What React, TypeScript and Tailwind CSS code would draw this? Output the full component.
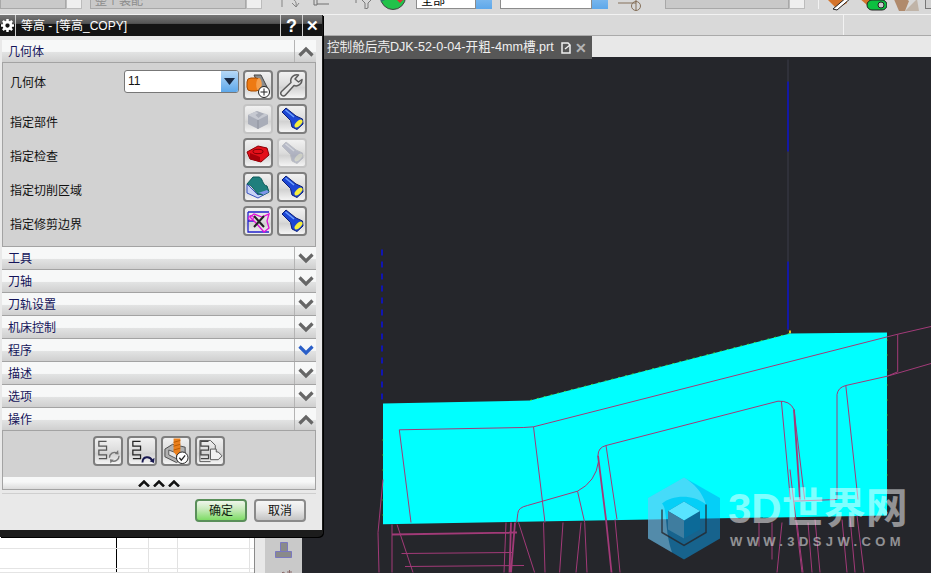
import type { ReactNode } from 'react';

const sections = ['工具', '刀轴', '刀轨设置', '机床控制', '程序', '描述', '选项'];
const columns = ['w-[117px] border-r border-black', 'w-[32px] border-r border-[#e2e2e2]', 'w-[29px] border-r border-[#e2e2e2]', 'w-[72px] border-r border-[#e2e2e2]'];
const sheetRows = ['h-[12px]', 'h-[20px]', 'h-[4px]'];

function Chevron({ up = false, color = '#666666' }: { up?: boolean; color?: string }) {
  return (
    <svg width="16" height="11" viewBox="0 0 16 11">
      <path d={up ? 'M1.500 9.500 8 3l6.500 6.500' : 'M1.500 1.500 8 8l6.500-6.500'} fill="none" stroke={color} strokeWidth="3.200" />
    </svg>
  );
}

function SectionHead({ title, open = false, blue = false }: { title: string; open?: boolean; blue?: boolean }) {
  return (
    <div className="flex h-[23px] items-stretch border-b border-[#a3a3a3] bg-[linear-gradient(#f7f8f8_52%,#e2e3e3_56%,#cfcfcf)]">
      <span className="flex-1 pl-[6px] pt-[4px] text-[12px] leading-[17px] text-[#14145a]">{title}</span>
      <span className="flex w-[22px] items-center justify-center border-l border-[#b4b4b4]">
        <Chevron up={open} color={blue ? '#2a5fc8' : '#666666'} />
      </span>
    </div>
  );
}

function IconButton({ children, dim = false }: { children: ReactNode; dim?: boolean }) {
  return (
    <button
      className={`flex h-[30px] w-[30px] shrink-0 items-center justify-center rounded-[4px] border-2 bg-[linear-gradient(#f1f1f1,#dcdcdc_50%,#d2d2d2_60%,#f4f4f4)] ${
        dim ? 'border-[#c4c4c4]' : 'border-[#7e7e7e]'
      }`}
    >
      {children}
    </button>
  );
}

function Flashlight({ dim = false }: { dim?: boolean }) {
  return (
    <svg width="25" height="25" viewBox="0 0 25 25" opacity={dim ? 0.55 : 1}>
      <path
        d="M2 5 6 1l10 8 6.500 3 .5 5-6 5.500-5-2.500-1.500-6.500z"
        fill={dim ? '#8f95ad' : '#1c46d4'}
        stroke={dim ? '#9a9ea8' : '#0b1f78'}
      />
      <path d="M5.500 3 14 10" stroke={dim ? '#c4c8d4' : '#6fa0ff'} strokeWidth="1.500" />
      <ellipse cx="18.500" cy="16.500" rx="5" ry="2.400" transform="rotate(-45 18.500 16.500)" fill={dim ? '#c6c9b8' : '#f6ee3c'} />
    </svg>
  );
}

function GeometryNew() {
  return (
    <svg width="26" height="26" viewBox="0 0 26 26">
      <path d="M9 3h7l7 14-6 3z" fill="#8c8c8c" stroke="#444444" />
      <rect x="2" y="6" width="13" height="13" rx="4" fill="#ee7a12" stroke="#a84c00" />
      <ellipse cx="14" cy="12.500" rx="2.800" ry="6.500" fill="#f6a04c" />
      <circle cx="19" cy="20" r="5.500" fill="#ffffff" stroke="#222222" />
      <path d="M19 16.500v7M15.500 20h7" stroke="#222222" />
    </svg>
  );
}

function WrenchIcon() {
  return (
    <svg width="26" height="26" viewBox="0 0 26 26">
      <path
        d="M23 7.500a6 6 0 0 1-8 6L6.500 23a2.600 2.600 0 0 1-4-3.500L12 10.500a6 6 0 0 1 7.500-7.500L16 7l3.500 3z"
        fill="#e6e6e6"
        stroke="#5c5c5c"
        strokeWidth="1.500"
        strokeLinejoin="round"
      />
    </svg>
  );
}

function PartIcon() {
  return (
    <svg width="26" height="26" viewBox="0 0 26 26">
      <path d="M3 9 12 5l11 4v9l-10 5-10-5z" fill="#a9adb8" />
      <path d="M3 9l10 5 10-5-3-1.500-3 1.500-3.500 3-3-3 3-2-3-1.500z" fill="#c6c9d1" />
      <path d="M13 14v9" stroke="#8d919c" />
    </svg>
  );
}

function CheckIcon() {
  return (
    <svg width="26" height="26" viewBox="0 0 26 26">
      <path d="M2 12 13 6l9 2 2 7-8 7-11-3z" fill="#e4101a" stroke="#8a0006" />
      <path d="M5 19v-6l10 4v5z" fill="#a8000a" />
      <ellipse cx="13" cy="11.500" rx="5" ry="2.200" fill="none" stroke="#7a0005" />
    </svg>
  );
}

function AreaIcon() {
  return (
    <svg width="26" height="26" viewBox="0 0 26 26">
      <path d="M2 10v9l11 5 11-6-2-2-9 5z" fill="#c7d2f5" stroke="#3a52c0" />
      <path d="M2 10 8 3h6c4 1 3 8 8 9l2 6-6 3-5-1C9 16 7 11 2 10z" fill="#1f7f7d" stroke="#0c5a5a" />
      <path d="M13 19c3 0 5 1 5 2l6-3-2-2z" fill="#7f95ea" />
    </svg>
  );
}

function BoundaryIcon() {
  return (
    <svg width="26" height="26" viewBox="0 0 26 26">
      <path d="M3 4h21M3 4v20h21M3 13h6" fill="none" stroke="#2222cc" strokeWidth="1.300" />
      <path d="M5 9 9 6l8 3 7-3-2 7 2 7-5 4-8-9z" fill="none" stroke="#e010d8" strokeWidth="1.300" />
      <circle cx="6" cy="10" r="2.500" fill="none" stroke="#e010d8" />
      <path d="m9 8 10 11M19 8 9 19" stroke="#222222" strokeWidth="2" />
    </svg>
  );
}

function Steps({ color = '#555555' }: { color?: string }) {
  return <path d="M12 3H4v5h8v4H4v5h8v4H4" fill="none" stroke={color} strokeWidth="1.300" />;
}

function VerifyOp() {
  return (
    <svg width="27" height="27" viewBox="0 0 27 27">
      <Steps />
      <path d="M15 20a5.500 5.500 0 0 1 8-5M25 18a5.500 5.500 0 0 1-8 5" fill="none" stroke="#777777" strokeWidth="1.400" />
      <path d="m24 12 .5 4.500-4-.5zM16 26l-.5-4.500 4 .5z" fill="#777777" />
    </svg>
  );
}

function ReplayOp() {
  return (
    <svg width="27" height="27" viewBox="0 0 27 27">
      <Steps color="#222222" />
      <path d="M14 25c0-7 8-7 10-2" fill="none" stroke="#181850" strokeWidth="2" />
      <path d="m26.500 20-.5 5.500-4.500-2z" fill="#181850" />
    </svg>
  );
}

function SimulateOp() {
  return (
    <svg width="27" height="27" viewBox="0 0 27 27">
      <path d="M2 11 10 6l13 3v10l-9 6-12-6z" fill="#b0b0b0" stroke="#4a4a4a" />
      <path d="M6 12l8 3v6l-8-4z" fill="#e4e4e4" stroke="#555555" />
      <path d="M11 0h7v14l-3.500 4-3.500-4z" fill="#ea7f1c" />
      <path d="m11 4 7-2M11 8l7-2M11 12l7-2" stroke="#b85a00" />
      <circle cx="20" cy="20" r="6" fill="#ffffff" stroke="#222222" />
      <path d="m17 20 2 2.500 4-5" fill="none" stroke="#222222" strokeWidth="1.300" />
    </svg>
  );
}

function ListOp() {
  return (
    <svg width="27" height="27" viewBox="0 0 27 27">
      <path d="M3 2h11l5 5v6M3 2v22h11" fill="none" stroke="#555555" />
      <Steps color="#444444" />
      <path d="M14 11h6v3h2l4 4-4 4H14z" fill="#f1f1f1" stroke="#555555" />
    </svg>
  );
}

function ViewportDrawing() {
  return (
    <svg viewBox="302 60 629 513" className="block h-full w-full">
      <path d="M788 60v272" stroke="#3c3c4a" />
      <path d="M788 82v70M788 262v68" stroke="#0a10c8" strokeWidth="1.500" />
      <path d="M382 250v154" stroke="#0a10e0" strokeWidth="1.500" strokeDasharray="6 6" />
      <rect x="789" y="331" width="2" height="3" fill="#e8c020" />
      <path d="M383 404 530 401 790 334 887 333 887 516 383 524.700z" fill="#00ffff" />
      <path d="M530 401 790 334" stroke="#38f050" strokeDasharray="2 5" />
      <path d="M887 340v180M383 440v84" stroke="#38f050" strokeDasharray="1 14" />
      <g fill="none" stroke="#a23a78">
        <path d="M411 523 399.300 430.300 523.800 428 533.500 427.300 897.700 334.700 931 327" />
        <path d="M533.500 427.300 545 523M887.300 376.700 931 364M897.700 334.700V372.300L887.300 376.700 845.800 386Q838 388 837 395L837 500M845.800 386 858 500" />
        <path d="M606 446 778 401.700Q790 401 794 410L804.700 500M781.400 401.700 790.400 500M606 446 617 520M606 446Q598 448 598 456" />
        <path d="M598.500 462Q596 482 577.500 491.700L527.400 506Q518 508 517.800 514L516.700 523M577.500 491.700 584.700 523M793 501.700 836.700 500" />
        <path d="M383 480 378 533 379 573" />
        <path d="M392 525V573M397 525 413 573M506 523 504 573M518.500 523 534.600 573M543.500 523 545 573M563 523 559.600 573M581 523 576 573M584.700 523 587 573M615 520 620 573" />
        <path d="M401.500 554 513 553M405 567 524 566" />
        <path d="M759 523V547M772 523V560M782 523 777 573M790 470 802 573M797 523 803 573M808 523 812 573M815 520 820 573M842 520 847 573M850 518 855 573M857 516 864 573" />
      </g>
      <g fill="none" stroke="#a23a78" strokeWidth="1.800">
        <path d="M392 535 517 533M511 523 509.500 573M515 523 511 573M598 456 606 520 611.500 573M794 410 800 500" />
      </g>
      <path d="M684 478 720 498.500V539L684 560 648 539V498.500z" fill="#0aa0f0" opacity="0.5" />
      <path d="M684 478 648 498.500V539L672 553C664 530 668 510 662 504 672 496 692 494 706 505 702 492 694 484 684 478z" fill="#ffffff" opacity="0.26" />
      <path d="M684 502 700 511.500V530L684 539 668 530V511.500z" fill="#0c6a98" />
      <path d="M684 502 700 511.500 684 521 668 511.500z" fill="#58e4ff" />
      <path d="M668 511.500 684 521V539L668 530z" fill="#3f7d9f" />
      <path d="M662 510V533L684 546 706 533V510M706 505V533" fill="none" stroke="#25262b" strokeWidth="1.500" opacity="0.8" />
    </svg>
  );
}

export default function App() {
  return (
    <div className="relative flex h-[573px] w-[931px] flex-col overflow-hidden bg-[#25262b] font-['Liberation_Sans','Noto_Sans_CJK_SC',sans-serif]">
      {/* top toolbar, only its lower edge is in the shot */}
      <div className="flex h-[15px] items-end overflow-hidden border-b border-[#f2f2f2] bg-[#d8d8d8] pb-[5px]">
        <div className="flex items-end">
          <div className="h-[22px] w-[66px] border border-[#a8a8a8] bg-[#c9c9c9]" />
          <div className="h-[22px] w-[16px] border border-[#bcbcbc] bg-[#efefef]" />
          <div className="ml-[8px] flex h-[22px] w-[156px] items-end border border-[#a8a8a8] bg-[#c9c9c9] pl-[4px] text-[12px] leading-[14px] text-[#8c8c8c]">
            整个装配
          </div>
          <div className="h-[22px] w-[16px] border border-[#bcbcbc] bg-[#efefef]" />
          <svg width="24" height="14" viewBox="0 0 24 14" className="ml-[16px]">
            <path d="M4 2v10M10 0c0 5 10 2 8 12M14 8l4 4 3-4" fill="none" stroke="#858585" />
          </svg>
          <svg width="20" height="14" viewBox="0 0 20 14" className="ml-[10px]">
            <path d="M2 1h3v9H2zM5 4h12M5 9h12" fill="none" stroke="#707070" />
          </svg>
          <svg width="20" height="14" viewBox="0 0 20 14" className="ml-[23px]">
            <path d="M4 2h15l-6 6v5l-3 1V8zM1 1v7" fill="none" stroke="#7a7a7a" />
          </svg>
          <svg width="26" height="26" viewBox="0 0 26 26" className="ml-[5px] mb-[-1px]">
            <circle cx="13" cy="13" r="12.500" fill="#22c24a" stroke="#444444" />
            <path d="M13 12 25 5l1 8-6 6z" fill="#e23030" />
            <path d="M13 12 1 18l-1-7 3-8z" fill="#2a7a6a" />
          </svg>
          <div className="ml-[10px] flex h-[22px] w-[60px] items-end border border-[#8c8c8c] bg-white pl-[4px] text-[12px] leading-[14px]">全部</div>
          <div className="h-[22px] w-[16px] bg-[linear-gradient(#9ccaf2,#5ea8ea)]" />
          <div className="ml-[8px] h-[22px] w-[92px] border border-[#8c8c8c] bg-white" />
          <div className="h-[22px] w-[16px] bg-[linear-gradient(#9ccaf2,#5ea8ea)]" />
          <svg width="26" height="16" viewBox="0 0 26 16" className="ml-[10px] mb-[-2px]">
            <path d="M0 8h18M18 0v16" stroke="#85705a" fill="none" />
            <circle cx="18" cy="11" r="4.500" fill="none" stroke="#85705a" />
          </svg>
          <div className="ml-[21px] h-[22px] w-[124px] border border-[#a8a8a8] bg-[#c9c9c9]" />
          <div className="h-[22px] w-[16px] border border-[#bcbcbc] bg-[#efefef]" />
          <div className="ml-[13px] h-[14px] w-px bg-[#f2f2f2]" />
          <svg width="26" height="16" viewBox="0 0 26 16" className="ml-[8px] mb-[-2px]">
            <path d="M0 4 6 0h14v8L10 14z" fill="#d4742c" />
            <path d="M6 14 20 2l4 1-14 12z" fill="#ffffff" stroke="#222222" />
          </svg>
          <svg width="28" height="16" viewBox="0 0 28 16" className="ml-[6px] mb-[-2px]">
            <path d="M0 3 5 0h10v6L8 10z" fill="#d4742c" />
            <rect x="8" y="5" width="20" height="10" rx="5" fill="#0cc040" stroke="#222222" />
            <circle cx="22" cy="10" r="3" fill="#c9c9c9" stroke="#222222" />
          </svg>
          <svg width="26" height="16" viewBox="0 0 26 16" className="ml-[6px] mb-[-2px]">
            <path d="M0 2 8 0l8 6-4 10H6z" fill="#b08a6c" />
            <path d="M12 16 24 4l2 12z" fill="#c0b4a8" />
          </svg>
          <div className="ml-[6px] h-[12px] w-[12px] border border-[#777777] bg-[#d0d0d0]" />
        </div>
      </div>

      <div className="flex h-[21px] justify-end border-b border-[#aaaaaa] bg-[#d9d9d9] pr-[87px]">
        <div className="h-full w-px bg-[#f2f2f2]" />
      </div>

      <div className="flex h-[23px]">
        <div className="h-[21px] w-[323px] bg-[#e8e8e8]" />
        <div className="flex h-[23px] w-[269px] items-center bg-[#575757] pl-[4px] text-[12.600px] text-[#efefef]">
          <span className="w-[233px] shrink-0 whitespace-nowrap">控制舱后壳DJK-52-0-04-开粗-4mm槽.prt</span>
          <svg width="10" height="12" viewBox="0 0 10 12" className="ml-[1px] shrink-0">
            <path d="M1 1h6l2 2v8H1z" fill="#575757" stroke="#efefef" strokeWidth="1.500" />
            <path d="M4 7l5-4" stroke="#efefef" strokeWidth="1.500" />
          </svg>
          <span className="ml-[4px] shrink-0 text-[14px] font-bold leading-none text-[#b4b4b4]">✕</span>
        </div>
        <div className="h-[21px] flex-1 bg-[#e8e8e8]" />
      </div>

      <div className="flex min-h-0 flex-1">
        {/* part of the sheet and the side palette, under the dialog */}
        <div className="flex w-[302px] items-end bg-[#e8e8e8]">
          <div className="w-[255px] border-r border-[#8a8a8a]">
            {sheetRows.map((row) => (
              <div key={row} className={`flex ${row} border-b border-[#e4e4e4] bg-white`}>
                {columns.map((col) => (
                  <div key={col} className={`h-full ${col}`} />
                ))}
              </div>
            ))}
          </div>
          <div className="w-[10px]" />
          <div className="flex h-[36px] w-[37px] flex-col items-center gap-[12px] overflow-hidden bg-[#c9c9c9] pt-[5px]">
            <svg width="18" height="16" viewBox="0 0 18 16" className="shrink-0">
              <path d="M5.500.5h7v9h-7z" fill="#8a8a8a" stroke="#7a78c0" />
              <path d="M.5 9.500h16v6H.5z" fill="#8a8a8a" stroke="#7a78c0" />
            </svg>
            <svg width="18" height="8" viewBox="0 0 18 8" className="shrink-0">
              <path d="M2 8 8 2l3 2M12 2h5M14.500 0v4" fill="none" stroke="#8a6a6a" />
            </svg>
          </div>
        </div>

        <div className="relative min-w-0 flex-1">
          <ViewportDrawing />
          <div className="absolute left-[426px] top-[426px] whitespace-nowrap text-[42px] font-bold leading-[48px] text-white/50">
            3D世界网
          </div>
          <div className="absolute left-[428px] top-[475px] whitespace-nowrap text-[13px] font-bold leading-[16px] tracking-[4.400px] text-white/50">
            WWW.3DSJW.COM
          </div>
        </div>
      </div>

      {/* floating operation dialog */}
      <div className="absolute left-0 top-[15px] h-[522px] w-[323px] rounded-br-[5px] border-b-[7px] border-r border-[#1c1c1c] bg-[#e9e9e9] shadow-[1px_1px_0_#000000]">
        <div className="flex h-[21px] items-stretch bg-[linear-gradient(#777777,#555555_40%,#141414_45%,#141414)] text-white">
          <span className="flex w-[16px] items-center justify-center border-r border-[#cfcfcf]">
            <svg width="13" height="13" viewBox="0 0 24 24">
              <circle cx="12" cy="12" r="6.500" fill="none" stroke="#ffffff" strokeWidth="5" />
              <path d="M12 0v5M12 19v5M0 12h5M19 12h5M3.500 3.500l3.500 3.500M17 17l3.500 3.500M3.500 20.500 7 17M17 7l3.500-3.500" stroke="#ffffff" strokeWidth="4.500" />
            </svg>
          </span>
          <span className="flex-1 pl-[5px] pt-[1px] text-[12px] leading-[21px]">等高 - [等高_COPY]</span>
          <span className="flex w-[22px] items-center justify-center border-l border-[#cfcfcf] text-[18px] font-bold leading-none">?</span>
          <span className="flex w-[20px] items-center justify-center border-l border-[#cfcfcf] text-[15px] font-bold leading-none">✕</span>
        </div>

        <div className="ml-[2px] w-[314px] pt-[4px]">
          <SectionHead title="几何体" open />
          <div className="flex h-[184px] flex-col gap-[4px] border-x border-b border-[#a3a3a3] bg-[#d2d2d2] pr-[8px] pt-[7px] text-[12px] text-[#111111]">
            <div className="flex h-[30px] items-start gap-[4px]">
              <span className="flex-1 pl-[7px] pt-[4px]">几何体</span>
              <div className="flex h-[23px] w-[115px] overflow-hidden rounded-[3px] border border-[#777777] bg-white">
                <span className="flex-1 pl-[3px] text-[12px] leading-[21px]">11</span>
                <span className="flex w-[17px] items-center justify-center bg-[linear-gradient(#b6d8f6,#5ea8ea)]">
                  <svg width="11" height="7" viewBox="0 0 11 7">
                    <path d="M0 0h11L5.500 7z" fill="#1a2a44" />
                  </svg>
                </span>
              </div>
              <IconButton><GeometryNew /></IconButton>
              <IconButton><WrenchIcon /></IconButton>
            </div>
            <div className="flex h-[30px] items-center gap-[4px]">
              <span className="flex-1 pl-[7px] pt-[8px]">指定部件</span>
              <IconButton dim><PartIcon /></IconButton>
              <IconButton><Flashlight /></IconButton>
            </div>
            <div className="flex h-[30px] items-center gap-[4px]">
              <span className="flex-1 pl-[7px] pt-[8px]">指定检查</span>
              <IconButton><CheckIcon /></IconButton>
              <IconButton dim><Flashlight dim /></IconButton>
            </div>
            <div className="flex h-[30px] items-center gap-[4px]">
              <span className="flex-1 pl-[7px] pt-[8px]">指定切削区域</span>
              <IconButton><AreaIcon /></IconButton>
              <IconButton><Flashlight /></IconButton>
            </div>
            <div className="flex h-[30px] items-center gap-[4px]">
              <span className="flex-1 pl-[7px] pt-[8px]">指定修剪边界</span>
              <IconButton><BoundaryIcon /></IconButton>
              <IconButton><Flashlight /></IconButton>
            </div>
          </div>

          {sections.map((title) => (
            <SectionHead key={title} title={title} blue={title === '程序'} />
          ))}
          <SectionHead title="操作" open />
          <div className="flex h-[46px] justify-center gap-[4px] border-x border-[#a3a3a3] bg-[#d2d2d2] pt-[5px]">
            <IconButton><VerifyOp /></IconButton>
            <IconButton><ReplayOp /></IconButton>
            <IconButton><SimulateOp /></IconButton>
            <IconButton><ListOp /></IconButton>
          </div>
          <div className="flex h-[13px] items-center justify-center gap-[3px] border-x border-b border-[#a3a3a3] bg-[linear-gradient(#f7f8f8_40%,#dcdcdc)]">
            {[0, 1, 2].map((i) => (
              <svg key={i} width="12" height="7" viewBox="0 0 12 7">
                <path d="M1 6.500 6 1.500l5 5" fill="none" stroke="#111111" strokeWidth="2.500" />
              </svg>
            ))}
          </div>
          <div className="mt-[3px] border-t border-[#cfcfcf]" />
          <div className="mt-[5px] flex justify-end gap-[7px] pr-[10px] text-[12px]">
            <button className="h-[23px] w-[52px] rounded-[4px] border-2 border-[#5a8f5a] bg-[linear-gradient(#f0f6ec,#c5eab8_45%,#7edc66)] text-[#102010]">确定</button>
            <button className="h-[23px] w-[52px] rounded-[4px] border-2 border-[#8a8a8a] bg-[linear-gradient(#f6f6f6,#e6e6e6_50%,#c4c4c4)] text-[#111111]">取消</button>
          </div>
        </div>
      </div>
    </div>
  );
}
